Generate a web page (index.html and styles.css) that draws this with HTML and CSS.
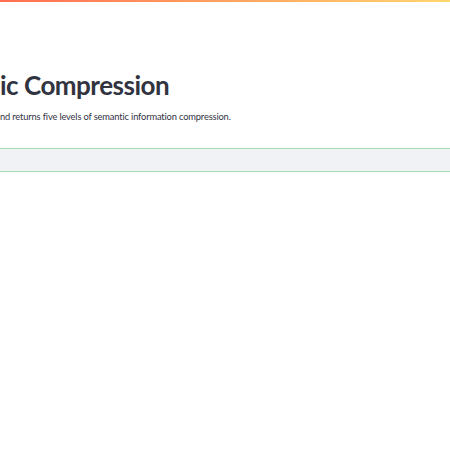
FILE: index.html
```html
<!DOCTYPE html>
<html lang="en">
<head>
    <meta charset="UTF-8">
    <meta name="viewport" content="width=device-width, initial-scale=1.0">
    <title>Semantic Compression</title>
    <link rel="stylesheet" href="styles.css">
</head>
<body>
<div class="decoration"></div>

<div class="main">
    <h1 class="title">ic Compression</h1>
    <p class="intro">nd returns five levels of semantic information compression.</p>

    <!-- input area -->
    <div class="input-bar"></div>
</div>
</body>
</html>
```

FILE: styles.css
```css
body {
    margin: 0;
    padding: 0;
    background-color: #fff;
    color: #31333f;
    font-family: Lato, "Open Sans", sans-serif;
}

.decoration {
    height: 2px;
    background: linear-gradient(90deg, #ff6d52, #ffd66f);
}

.main {
    padding-top: 67px;
}

.title {
    margin: 0;
    font-size: 26px;
    font-weight: 700;
    line-height: 32px;
    letter-spacing: -0.5px;
}

.intro {
    margin: 9px 0 0 0;
    font-size: 9.3px;
    line-height: 14px;
    letter-spacing: -0.15px;
}

.input-bar {
    margin-top: 24px;
    height: 22px;
    background-color: #f0f2f6;
    border-top: 1px solid #a9dcb5;
    border-bottom: 1px solid #a9dcb5;
}
```
